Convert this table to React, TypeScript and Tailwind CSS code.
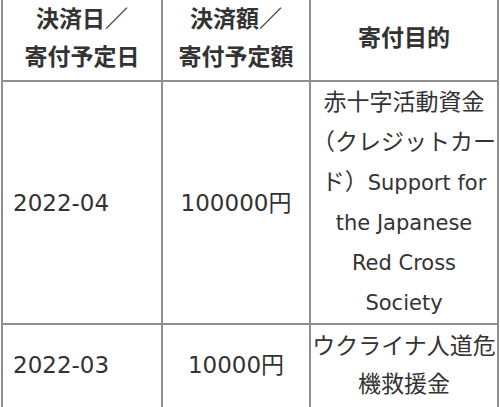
const font = { fontFamily: '"DejaVu Sans", "Noto Sans CJK JP", sans-serif' };

function Cell({
  children,
  first,
  className = "",
}: {
  children: React.ReactNode;
  first?: boolean;
  className?: string;
}) {
  return (
    <div
      className={`flex flex-col border-b-2 border-r-2 border-[#8f8f8f] ${first ? "border-l-2" : ""} ${className}`}
    >
      {children}
    </div>
  );
}

const en = "text-[21px]";

export default function App() {
  return (
    <div className="h-[407px] w-[500px] overflow-hidden bg-white">
      <div
        className="ml-px grid w-[498px] grid-cols-[162px_148px_188px] text-[23px] text-[#333]"
        style={font}
      >
        {/* header */}
        <Cell first className="h-[82px] items-center pb-[4px] text-center font-bold leading-[38px]">
          <span>決済日／</span>
          <span>寄付予定日</span>
        </Cell>
        <Cell className="h-[82px] items-center pb-[4px] text-center font-bold leading-[38px]">
          <span>決済額／</span>
          <span>寄付予定額</span>
        </Cell>
        <Cell className="h-[82px] items-center justify-center pb-[4px] text-center font-bold leading-[38px]">
          <span>寄付目的</span>
        </Cell>

        {/* 2022-04 */}
        <Cell first className="justify-center pl-[10px] leading-[40px]">
          <span>2022-04</span>
        </Cell>
        <Cell className="items-center justify-center leading-[40px]">
          <span>100000円</span>
        </Cell>
        <Cell className="items-center whitespace-nowrap text-center leading-[40px]">
          <span>赤十字活動資金</span>
          <span>（クレジットカー</span>
          <span>
            ド）<span className={en}>Support for</span>
          </span>
          <span className={en}>the Japanese</span>
          <span className={en}>Red Cross</span>
          <span className={en}>Society</span>
        </Cell>

        {/* 2022-03 */}
        <Cell first className="h-[120px] pb-[38px] pl-[10px] pt-[2px] leading-[38px]">
          <span className="mt-[19px]">2022-03</span>
        </Cell>
        <Cell className="h-[120px] items-center pb-[38px] pt-[2px] leading-[38px]">
          <span className="mt-[19px]">10000円</span>
        </Cell>
        <Cell className="h-[120px] items-center whitespace-nowrap pt-[2px] text-center leading-[38px]">
          <span>ウクライナ人道危</span>
          <span>機救援金</span>
        </Cell>
      </div>
    </div>
  );
}
